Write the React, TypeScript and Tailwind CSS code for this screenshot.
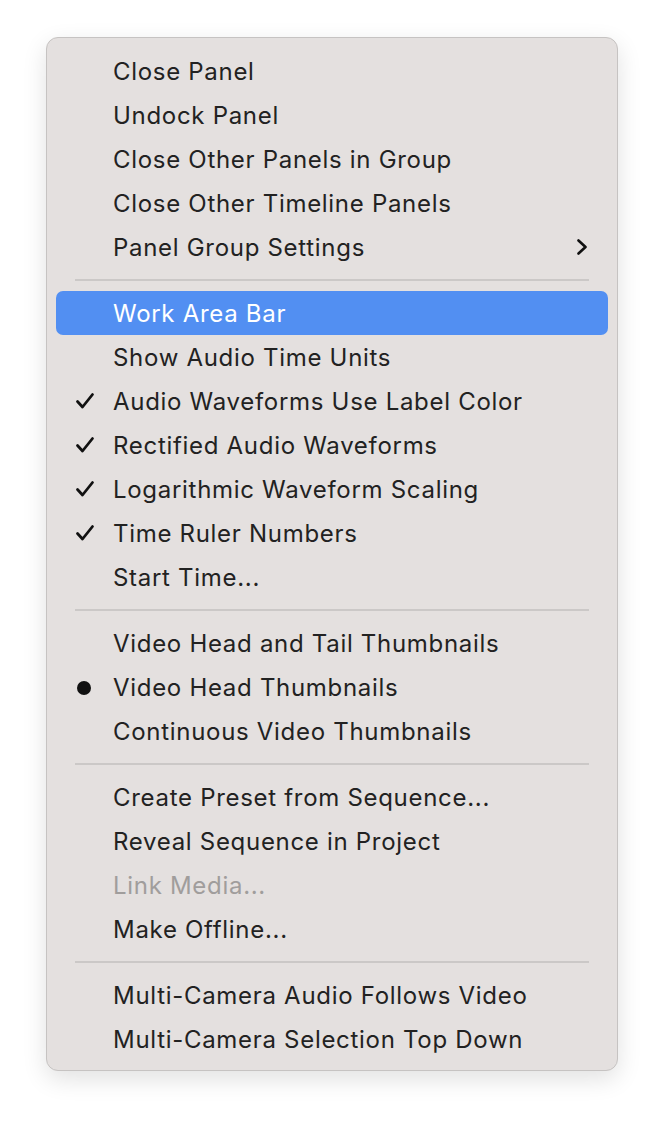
import { Fragment } from 'react';

type Item = {
  label: string;
  mark?: 'check' | 'dot';
  active?: boolean;
  disabled?: boolean;
  submenu?: boolean;
};

const GROUPS: Item[][] = [
  [
    { label: 'Close Panel' },
    { label: 'Undock Panel' },
    { label: 'Close Other Panels in Group' },
    { label: 'Close Other Timeline Panels' },
    { label: 'Panel Group Settings', submenu: true },
  ],
  [
    { label: 'Work Area Bar', active: true },
    { label: 'Show Audio Time Units' },
    { label: 'Audio Waveforms Use Label Color', mark: 'check' },
    { label: 'Rectified Audio Waveforms', mark: 'check' },
    { label: 'Logarithmic Waveform Scaling', mark: 'check' },
    { label: 'Time Ruler Numbers', mark: 'check' },
    { label: 'Start Time...' },
  ],
  [
    { label: 'Video Head and Tail Thumbnails' },
    { label: 'Video Head Thumbnails', mark: 'dot' },
    { label: 'Continuous Video Thumbnails' },
  ],
  [
    { label: 'Create Preset from Sequence...' },
    { label: 'Reveal Sequence in Project' },
    { label: 'Link Media...', disabled: true },
    { label: 'Make Offline...' },
  ],
  [
    { label: 'Multi-Camera Audio Follows Video' },
    { label: 'Multi-Camera Selection Top Down' },
  ],
];

function CheckMark() {
  return (
    <svg width="20" height="18" viewBox="0 0 20 18" fill="none">
      <path d="M2.5 9.5 L7.5 15 L17.5 2.5" stroke="#111" strokeWidth="2.8" strokeLinecap="round" strokeLinejoin="round" />
    </svg>
  );
}

function Chevron() {
  return (
    <svg width="12" height="16" viewBox="0 0 12 16" fill="none">
      <path d="M2.5 1.5 L9.5 8 L2.5 14.5" stroke="#111" strokeWidth="2.6" strokeLinecap="round" strokeLinejoin="round" />
    </svg>
  );
}

function MenuRow({ item }: { item: Item }) {
  return (
    <div
      className={
        'relative flex h-[44px] items-center rounded-[7px] pl-[57px] pr-[20px] ' +
        (item.active ? 'bg-[#528ff2] text-white' : item.disabled ? 'text-[#a09d9c]' : 'text-[#222222]')
      }
    >
      {item.mark === 'check' && (
        <span className="absolute left-[19px] top-[13px]">
          <CheckMark />
        </span>
      )}
      {item.mark === 'dot' && <span className="absolute left-[21px] top-[16px] h-[14px] w-[14px] rounded-full bg-[#111]" />}
      <span className="flex-1 pt-[2px] text-[24px] leading-none tracking-[0.7px]">{item.label}</span>
      {item.submenu && <Chevron />}
    </div>
  );
}

export default function App() {
  return (
    <div className="min-h-[1124px] w-[664px] bg-white pl-[46px] pt-[37px]" style={{ fontFamily: 'Inter, "Noto Sans", sans-serif' }}>
      <div className="w-[572px] rounded-[12px] border border-[#c6c3c2] bg-[#e4e0df] px-[9px] pt-[11px] pb-[9px] shadow-[0_8px_24px_rgba(0,0,0,0.12)]">
        {GROUPS.map((group, gi) => (
          <Fragment key={gi}>
            {gi > 0 && (
              <div className="flex h-[22px] items-center px-[19px]">
                <div className="h-[2px] w-full bg-[#cbc8c7]" />
              </div>
            )}
            {group.map(item => (
              <MenuRow key={item.label} item={item} />
            ))}
          </Fragment>
        ))}
      </div>
    </div>
  );
}
